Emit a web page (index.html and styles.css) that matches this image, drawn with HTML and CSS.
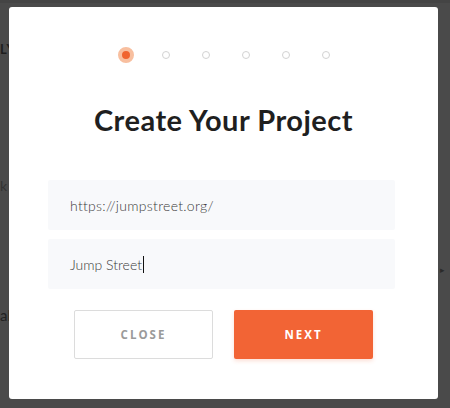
FILE: index.html
```html
<!DOCTYPE html>
<html>
<head>
<meta charset="utf-8">
<link rel="stylesheet" href="styles.css">
</head>
<body>
<div class="page">
  <div class="bg-line bg-ly">LY</div>
  <div class="bg-line bg-k">k</div>
  <div class="bg-line bg-al">al</div>
  <div class="bg-arrow">&#9656;</div>
  <div class="modal">
    <div class="steps">
      <span class="dot active"></span>
      <span class="dot"></span>
      <span class="dot"></span>
      <span class="dot"></span>
      <span class="dot"></span>
      <span class="dot"></span>
    </div>
    <h1 class="title">Create Your Project</h1>
    <div class="fields">
      <div class="field field-url">https://jumpstreet.org/</div>
      <div class="field">Jump Street<span class="caret"></span></div>
    </div>
    <div class="actions">
      <button class="btn btn-close">CLOSE</button>
      <button class="btn btn-next">NEXT</button>
    </div>
  </div>
</div>
</body>
</html>
```
FILE: styles.css
```css
html, body {
  margin: 0;
  padding: 0;
}
body {
  background: #4a4a4a;
  width: 450px;
  height: 408px;
  overflow: hidden;
  font-family: "Lato", "Liberation Sans", sans-serif;
}
.page {
  position: relative;
  width: 450px;
  height: 408px;
  border-top: 3px solid #444;
  box-sizing: border-box;
}
.bg-line {
  position: absolute;
  left: 0;
  font-size: 14px;
  color: #1e1e1e;
}
.bg-ly {
  top: 38px;
  font-weight: 700;
  font-size: 13px;
  letter-spacing: 1px;
}
.bg-k {
  top: 174px;
  color: #333;
}
.bg-al {
  top: 303px;
  color: #222;
  font-size: 15px;
}
.bg-arrow {
  position: absolute;
  left: 440px;
  top: 261px;
  font-size: 9px;
  color: #2a2a2a;
}
.modal {
  position: absolute;
  left: 9px;
  top: 4px;
  width: 429px;
  height: 392px;
  background: #fff;
  border-radius: 3px;
  box-sizing: border-box;
  padding-top: 40px;
  display: flex;
  flex-direction: column;
  align-items: center;
}
.steps {
  display: flex;
  align-items: center;
  height: 16px;
  margin-left: 4px;
}
.dot {
  width: 8px;
  height: 8px;
  box-sizing: border-box;
  border: 1.6px solid #d2d2d2;
  border-radius: 50%;
  margin: 0 16px;
}
.dot.active {
  width: 16px;
  height: 16px;
  border: 4px solid #f8bf9f;
  background: #f0642f;
  margin: 0 12px;
}
.title {
  margin: 40px 0 0 0;
  font-size: 29px;
  line-height: 34px;
  font-weight: 700;
  color: #1f1f1f;
  letter-spacing: 0.5px;
}
.fields {
  margin-top: 43px;
  width: 347px;
  margin-left: -4px;
  display: flex;
  flex-direction: column;
  gap: 9px;
}
.field {
  height: 50px;
  background: #f8f9fb;
  border-radius: 2px;
  display: flex;
  align-items: center;
  padding-left: 22px;
  font-size: 14px;
  color: #3a3a3a;
  font-weight: 300;
}
.field-url {
  letter-spacing: 0.3px;
}
.caret {
  display: inline-block;
  width: 1px;
  height: 17px;
  background: #111;
  margin-left: 1px;
}
.actions {
  margin-top: 21px;
  display: flex;
  gap: 21px;
}
.btn {
  width: 139px;
  height: 49px;
  box-sizing: border-box;
  border-radius: 2px;
  font-family: "Open Sans", "Liberation Sans", sans-serif;
  font-weight: 700;
  font-size: 11.5px;
  letter-spacing: 2px;
  cursor: pointer;
}
.btn-close {
  background: #fff;
  border: 1px solid #dcdcdc;
  color: #9a9a9a;
}
.btn-next {
  background: #f26435;
  border: none;
  color: #fff;
  box-shadow: 0 2px 4px rgba(242, 100, 53, 0.2);
}
```
